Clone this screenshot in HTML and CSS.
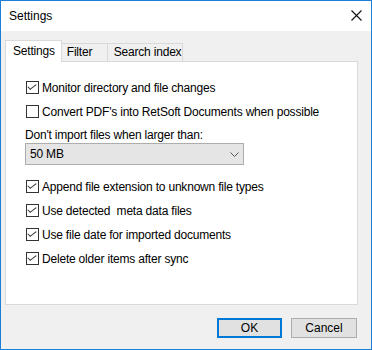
FILE: index.html
```html
<!DOCTYPE html>
<html lang="en">
<head>
    <meta charset="UTF-8">
    <title>Settings</title>
    <link rel="stylesheet" href="styles.css">
</head>
<body>
    <div class="window">
        <div class="titlebar">
            <span class="title">Settings</span>
            <svg class="close" width="11" height="11" viewBox="0 0 11 11">
                <path d="M0.5 0.5 L10.5 10.5 M10.5 0.5 L0.5 10.5" stroke="#111" stroke-width="1.1" fill="none"/>
            </svg>
        </div>
        <div class="content">
            <div class="tabs">
                <div class="tab active">Settings</div>
                <div class="tab filter">Filter</div>
                <div class="tab index">Search index</div>
            </div>
            <div class="panel">
                <label class="check first"><span class="box on"></span>Monitor directory and file changes</label>
                <label class="check second"><span class="box"></span>Convert PDF's into RetSoft Documents when possible</label>
                <div class="field-label">Don't import files when larger than:</div>
                <div class="select">
                    <span>50 MB</span>
                    <svg width="9" height="5" viewBox="0 0 9 5">
                        <path d="M0.5 0.5 L4.5 4.5 L8.5 0.5" stroke="#555" fill="none"/>
                    </svg>
                </div>
                <label class="check after-select"><span class="box on"></span>Append file extension to unknown file types</label>
                <label class="check"><span class="box on"></span>Use detected&nbsp; meta data files</label>
                <label class="check"><span class="box on"></span>Use file date for imported documents</label>
                <label class="check"><span class="box on"></span>Delete older items after sync</label>
            </div>
            <div class="buttons">
                <button class="btn default">OK</button>
                <button class="btn">Cancel</button>
            </div>
        </div>
    </div>
</body>
</html>
```

FILE: styles.css
```css
body {
    margin: 0;
    font-family: "Liberation Sans", Arial, sans-serif;
    font-size: 12px;
    letter-spacing: -0.2px;
    color: #000;
    background: #fff;
}
.window {
    width: 372px;
    height: 350px;
    box-sizing: border-box;
    border: 1px solid #1c7fd6;
    background: #f0f0f0;
    display: flex;
    flex-direction: column;
}
.titlebar {
    height: 30px;
    background: #fff;
    display: flex;
    align-items: center;
    justify-content: space-between;
    padding: 0 9px 0 8px;
}
.title {
    font-size: 12px;
    margin-top: -1px;
    letter-spacing: 0;
}
.close {
    display: block;
    margin-top: -1px;
}
.content {
    flex: 1;
    padding: 10px 13px 0 4px;
}
.tabs {
    display: flex;
    align-items: flex-end;
    height: 20px;
    position: relative;
    z-index: 1;
}
.tab {
    height: 17px;
    line-height: 16px;
    border: 1px solid #d9d9d9;
    border-bottom: none;
    border-left: none;
    background: #f0f0f0;
    box-sizing: content-box;
    white-space: nowrap;
}
.tab.active {
    line-height: 20px;
    border-left: 1px solid #d9d9d9;
    background: #fff;
    padding: 0 6px 0 7px;
    margin-bottom: -1px;
    height: 21px;
}
.tab.filter {
    width: 40px;
    padding-left: 5px;
}
.tab.index {
    width: 68px;
    padding-left: 6px;
}
.panel {
    height: 244px;
    box-sizing: border-box;
    border: 1px solid #d9d9d9;
    background: #fff;
    padding: 19px 0 0 20px;
}
.check {
    display: flex;
    align-items: center;
    height: 13px;
    margin-top: 11px;
    white-space: nowrap;
}
.check.first {
    margin-top: 0;
}
.check.after-select {
    margin-top: 15px;
}
.box {
    width: 13px;
    height: 13px;
    box-sizing: border-box;
    border: 1px solid #333;
    background: #fff;
    margin-right: 3px;
    flex: none;
    position: relative;
}
.box.on::after {
    content: "";
    position: absolute;
    left: 3px;
    top: 0px;
    width: 3px;
    height: 7px;
    border: solid #333;
    border-width: 0 1px 1px 0;
    transform: rotate(45deg) skewX(-8deg);
}
.field-label {
    margin: 9px 0 0 -1px;
    line-height: 16px;
}
.select {
    width: 219px;
    height: 22px;
    box-sizing: border-box;
    margin: 0 0 0 -1px;
    border: 1px solid #adadad;
    background: #e5e5e5;
    display: flex;
    align-items: center;
    justify-content: space-between;
    padding: 0 4px 0 4px;
}
.select svg {
    display: block;
    margin-top: 1px;
}
.buttons {
    display: flex;
    justify-content: flex-end;
    gap: 9px;
    margin-top: 13px;
    padding-right: 1px;
}
.btn {
    font-family: "Liberation Sans", Arial, sans-serif;
    font-size: 12px;
    width: 66px;
    height: 20px;
    box-sizing: border-box;
    border: 1px solid #adadad;
    background: #e1e1e1;
    color: #000;
    padding: 0;
}
.btn.default {
    width: 65px;
    border: 2px solid #0078d7;
}
```
